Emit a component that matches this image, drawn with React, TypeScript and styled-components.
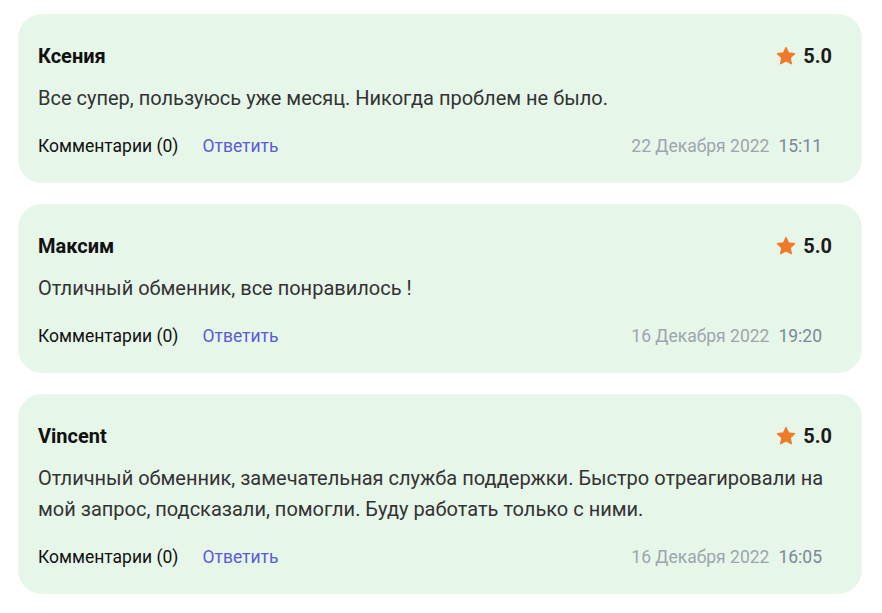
import React from "react";
import styled, { createGlobalStyle } from "styled-components";

const GlobalStyle = createGlobalStyle`
  body {
    margin: 0;
    background: #ffffff;
    font-family: Roboto, "Noto Sans", Arial, sans-serif;
  }
`;

const List = styled.div`
  display: flex;
  flex-direction: column;
  gap: 21px;
  padding: 14px 20px 14px 18px;
`;

const Card = styled.div`
  background: #e6f6e9;
  border-radius: 24px;
  padding: 30px 30px 25px 20px;
`;

const Head = styled.div`
  display: flex;
  justify-content: space-between;
  align-items: center;
  height: 24px;
`;

const Name = styled.div`
  font-size: 20px;
  font-weight: 700;
  color: #111;
`;

const Rating = styled.div`
  display: flex;
  align-items: center;
  gap: 7px;
  font-size: 20px;
  font-weight: 700;
  color: #1b1b1b;
`;

const Text = styled.p`
  margin: 15px 0 0;
  font-size: 20px;
  line-height: 31px;
  color: #333;
`;

const Footer = styled.div`
  display: flex;
  align-items: center;
  margin-top: 20px;
  padding-right: 10px;
  height: 24px;
  font-size: 17.5px;
`;

const Comments = styled.span`
  color: #111;
`;

const Reply = styled.a`
  margin-left: 24px;
  color: #5b5bd8;
  cursor: pointer;
`;

const DateText = styled.span`
  margin-left: auto;
  color: #9ba6ad;
`;

const Time = styled.span`
  margin-left: 9px;
  color: #7a8998;
`;

const Star = () => (
  <svg width="20" height="20" viewBox="0 0 24 24">
    <path
      d="M12 1.8l3.1 6.6 7.1.9-5.2 4.9 1.4 7.1L12 17.8l-6.4 3.5 1.4-7.1-5.2-4.9 7.1-.9z"
      fill="#f07a2c"
      stroke="#f07a2c"
      strokeWidth="1.6"
      strokeLinejoin="round"
    />
  </svg>
);

type Review = { name: string; text: string; date: string; time: string };

const reviews: Review[] = [
  {
    name: "Ксения",
    text: "Все супер, пользуюсь уже месяц. Никогда проблем не было.",
    date: "22 Декабря 2022",
    time: "15:11",
  },
  {
    name: "Максим",
    text: "Отличный обменник, все понравилось !",
    date: "16 Декабря 2022",
    time: "19:20",
  },
  {
    name: "Vincent",
    text: "Отличный обменник, замечательная служба поддержки. Быстро отреагировали на мой запрос, подсказали, помогли. Буду работать только с ними.",
    date: "16 Декабря 2022",
    time: "16:05",
  },
];

const App = () => (
  <>
    <GlobalStyle />
    <List>
      {reviews.map((r) => (
        <Card key={r.name}>
          <Head>
            <Name>{r.name}</Name>
            <Rating>
              <Star />
              5.0
            </Rating>
          </Head>
          <Text>{r.text}</Text>
          <Footer>
            <Comments>Комментарии (0)</Comments>
            <Reply>Ответить</Reply>
            <DateText>{r.date}</DateText>
            <Time>{r.time}</Time>
          </Footer>
        </Card>
      ))}
    </List>
  </>
);

export default App;
